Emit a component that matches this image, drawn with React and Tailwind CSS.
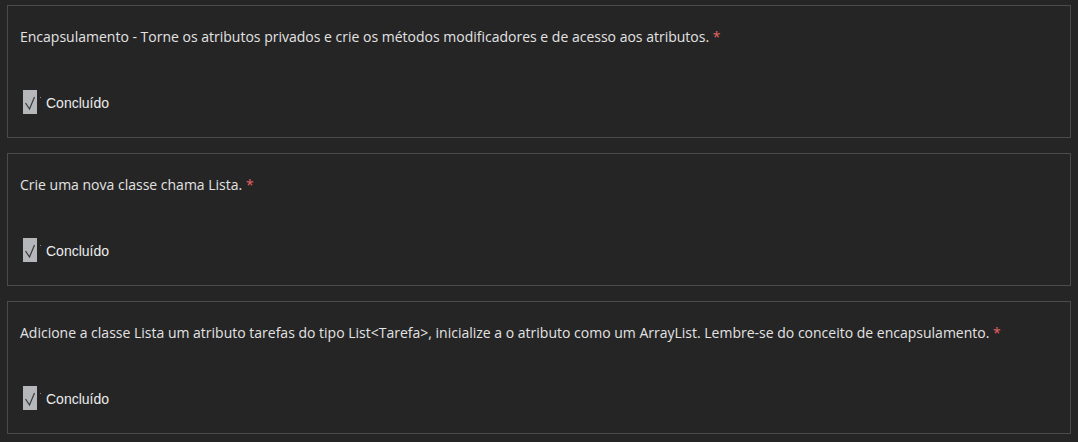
import React from 'react'

const tasks = [
  'Encapsulamento - Torne os atributos privados e crie os métodos modificadores e de acesso aos atributos.',
  'Crie uma nova classe chama Lista.',
  'Adicione a classe Lista um atributo tarefas do tipo List<Tarefa>, inicialize a o atributo como um ArrayList. Lembre-se do conceito de encapsulamento.',
]

const TaskCard = ({ text }) => (
  <div className="h-[133px] border border-[#4b4b4b] pl-[12px] pt-[22px]">
    <p className="text-[14px] leading-[18px] text-[#e3e3e3] font-['Open_Sans',sans-serif]">
      {text} <span className="text-[#e86464]">*</span>
    </p>
    {/* checkbox row */}
    <div className="mt-[44px] flex items-center pl-[3px]">
      <div className="w-[14px] h-[24px] bg-[#b5b7bb]">
        <svg width="14" height="24" viewBox="0 0 14 24">
          <polyline points="2.5,13 6.5,19 11.5,7" fill="none" stroke="#3a3a3a" strokeWidth="1.2" />
        </svg>
      </div>
      <span className="ml-[3px] mb-[10px] w-[1px] h-[1px] bg-[#888]"></span>
      <span className="ml-[5px] mt-[2px] text-[14px] text-[#ececec] font-['Liberation_Sans',Arial,sans-serif]">Concluído</span>
    </div>
  </div>
)

const App = () => {
  return (
    <div className="min-h-[442px] w-full bg-[#252525] px-[7px] pt-[5px] flex flex-col gap-[15px]">
      {tasks.map((t, i) => (
        <TaskCard key={i} text={t} />
      ))}
    </div>
  )
}

export default App
